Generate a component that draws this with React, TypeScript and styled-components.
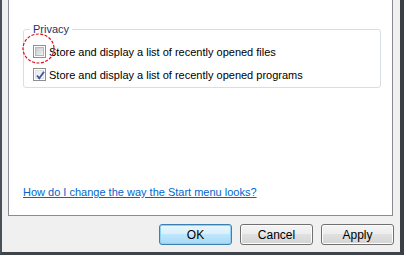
import React from "react";
import styled, { createGlobalStyle } from "styled-components";

const Global = createGlobalStyle`
  html, body { margin: 0; padding: 0; background: #ffffff; }
  body { font-family: "Liberation Sans", Arial, sans-serif; font-size: 11px; }
`;

const Frame = styled.div`
  box-sizing: border-box;
  width: 404px;
  height: 255px;
  border-left: 2px solid #4b5158;
  border-right: 4px solid #3a3f45;
  border-bottom: 3px solid #3f444a;
  background: #f0f0f0;
  display: flex;
  flex-direction: column;
  padding: 0 7px 0 6px;
`;

const Panel = styled.div`
  background: #ffffff;
  border: 1px solid #898c95;
  border-top: none;
  display: flex;
  flex-direction: column;
  padding: 29px 11px 15px 14px;
`;

const Group = styled.div`
  position: relative;
  border: 1px solid #d5dfe5;
  border-radius: 3px;
  padding: 10px 0 1px 9px;
  display: flex;
  flex-direction: column;
`;

const Legend = styled.span`
  position: absolute;
  top: -9px;
  left: 6px;
  padding: 0 3px;
  background: #ffffff;
  color: #1d3566;
  line-height: 16px;
  font-size: 11px;
`;

const Row = styled.label`
  display: flex;
  align-items: center;
  height: 23px;
  gap: 3px;
  color: #000000;
`;

const Box = styled.span<{ $checked?: boolean }>`
  width: 13px;
  height: 13px;
  box-sizing: border-box;
  border: 1px solid #8e8f8f;
  background: #ffffff;
  padding: 1px;
  display: flex;
  flex-shrink: 0;
  position: relative;
  &::before {
    content: "";
    flex: 1;
    border: 1px solid #b4b8bd;
    background: linear-gradient(135deg, #c6cad0 0%, #dfe1e4 60%, #f2f3f4 100%);
    opacity: ${(p) => (p.$checked ? 0.4 : 1)};
  }
`;

const Check = styled.svg`
  position: absolute;
  left: 1px;
  top: 1px;
`;

const Text = styled.span`
  line-height: 16px;
  white-space: nowrap;
  font-size: 11px;
`;

const Link = styled.a`
  margin-top: 96px;
  color: #0066cc;
  text-decoration: underline;
  line-height: 16px;
  font-size: 11px;
  align-self: flex-start;
  cursor: pointer;
`;

const Buttons = styled.div`
  display: flex;
  justify-content: flex-end;
  gap: 8px;
  margin-top: 8px;
  margin-right: -1px;
`;

const Button = styled.button<{ $default?: boolean }>`
  width: 73px;
  height: 21px;
  box-sizing: border-box;
  border-radius: 3px;
  font-family: inherit;
  font-size: 12px;
  color: #000000;
  padding: 0;
  border: 1px solid ${(p) => (p.$default ? "#3c7fb1" : "#707070")};
  background: ${(p) =>
    p.$default
      ? "linear-gradient(#eaf6fd 0%, #d9f0fc 45%, #bee6fd 50%, #a7d9f5 100%)"
      : "linear-gradient(#f4f4f4 0%, #ededed 45%, #e0e0e0 50%, #d4d4d4 100%)"};
  box-shadow: inset 0 0 0 1px ${(p) => (p.$default ? "#8ed1f4" : "#fcfcfc")};
`;

const Circle = styled.svg`
  position: absolute;
  left: 22px;
  top: 33px;
  pointer-events: none;
`;

const Wrap = styled.div`
  position: relative;
`;

export default function App() {
  return (
    <Wrap>
      <Global />
      <Frame>
        <Panel>
          <Group>
            <Legend>Privacy</Legend>
            <Row>
              <Box />
              <Text>Store and display a list of recently opened files</Text>
            </Row>
            <Row>
              <Box $checked>
                <Check width="11" height="11" viewBox="0 0 11 11">
                  <path d="M2 5.5 L4.3 8.3 L9 1.8" fill="none" stroke="#3e55a3" strokeWidth="1.8" />
                </Check>
              </Box>
              <Text>Store and display a list of recently opened programs</Text>
            </Row>
          </Group>
          <Link>How do I change the way the Start menu looks?</Link>
        </Panel>
        <Buttons>
          <Button $default>OK</Button>
          <Button>Cancel</Button>
          <Button>Apply</Button>
        </Buttons>
      </Frame>
      <Circle width="33" height="31" viewBox="0 0 33 31">
        <ellipse cx="16.5" cy="15.5" rx="15.5" ry="14.5" fill="none" stroke="#e0101a" strokeWidth="1.2" strokeDasharray="3 1.5" />
      </Circle>
    </Wrap>
  );
}
